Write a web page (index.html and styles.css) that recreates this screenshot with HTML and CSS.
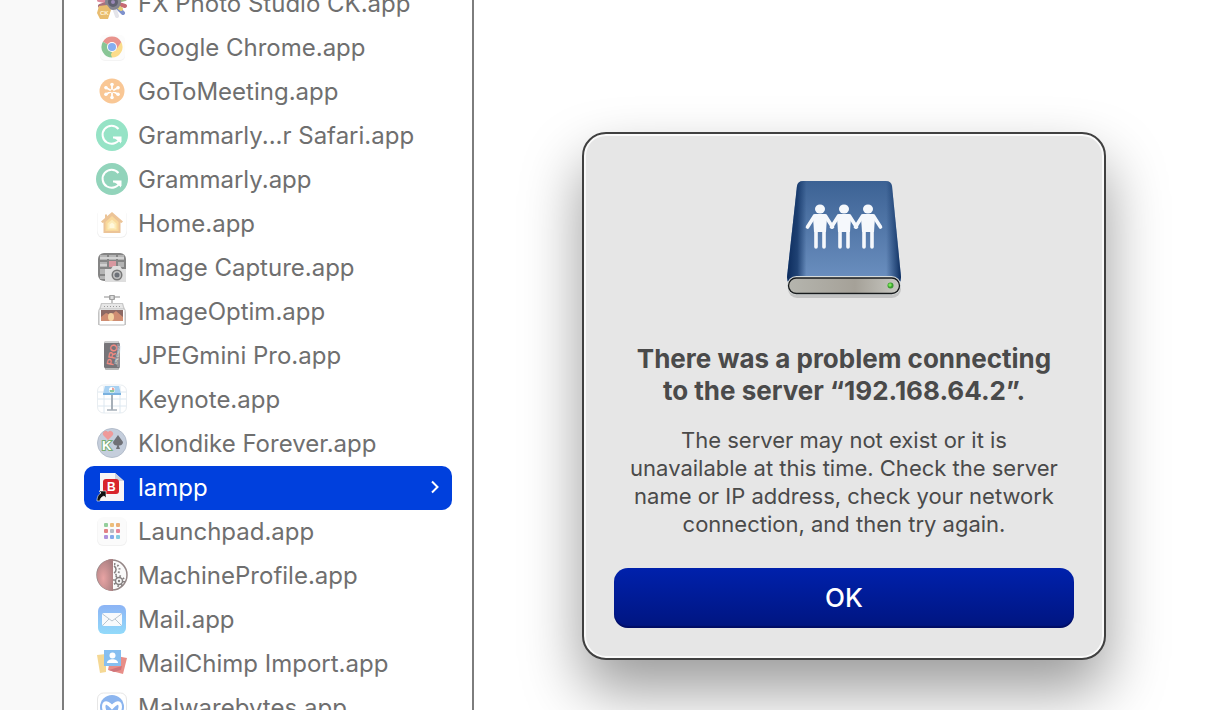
FILE: index.html
```html
<!DOCTYPE html>
<html lang="en">
<head>
  <meta charset="UTF-8" />
  <meta name="viewport" content="width=device-width, initial-scale=1.0"/>
  <title>Applications</title>
  <link rel="stylesheet" href="styles.css">
</head>
<body>
  <aside class="sidebar"></aside>

  <nav class="column" aria-label="Applications">
    <ul class="files">
      <li><a class="file" href="#">
        <svg class="icon" viewBox="0 -1 32 32">
          <g stroke-width="4" stroke-linecap="round">
            <path d="M16 14L3 12" stroke="#dc8a9c"/>
            <path d="M16 14L6 4" stroke="#8fc0d8"/>
            <path d="M16 14L26 4" stroke="#efb890"/>
            <path d="M16 14L29 11" stroke="#96b884"/>
            <path d="M16 14L29 18" stroke="#c66a72"/>
            <path d="M16 14L27 25" stroke="#7f92cc"/>
            <path d="M16 14L21 28" stroke="#e4e4ea"/>
            <path d="M16 14L4 18" stroke="#a8707c"/>
            <path d="M16 14L25 21" stroke="#e2cc78"/>
          </g>
          <circle cx="17" cy="14" r="8" fill="#85858f"/>
          <circle cx="17" cy="14" r="5" fill="#5f6070"/>
          <circle cx="17" cy="14" r="2" fill="#9a88b8"/>
          <path d="M3 18L11 17L15 22L12 31L4 31L1 25Z" fill="#e8bc6e"/>
          <text class="tiny" x="4" y="27" font-size="6" fill="#fff4d8">CK</text>
        </svg>
        <span>FX Photo Studio CK.app</span></a></li>
      <li><a class="file" href="#">
        <svg class="icon" viewBox="0 -1 32 32">
          <rect x="4" y="4" width="25" height="25" rx="5" fill="#f4f4f4"/>
          <rect x="4" y="3" width="25" height="25" rx="5" fill="#fcfcfc"/>
          <path d="M16 15L6.900 9.750A10.500 10.500 0 0 1 25.100 9.750Z" fill="#e8938d"/>
          <path d="M16 15L25.100 9.750A10.500 10.500 0 0 1 16 25.500Z" fill="#fbdc8b"/>
          <path d="M16 15L16 25.500A10.500 10.500 0 0 1 6.900 9.750Z" fill="#88c595"/>
          <path d="M16 10H25.200L20.300 17.500Z" fill="#e8938d"/>
          <path d="M20.300 17.500L16 25.500L14 20Z" fill="#fbdc8b"/>
          <path d="M6.900 9.750L11.700 17.500L16 20L14 25Z" fill="#88c595"/>
          <circle cx="16" cy="15" r="5" fill="#fff"/>
          <circle cx="16" cy="15" r="4" fill="#85aef0"/>
        </svg>
        <span>Google Chrome.app</span></a></li>
      <li><a class="file" href="#">
        <svg class="icon" viewBox="0 -1 32 32">
          <circle cx="16" cy="15" r="12.500" fill="#f9c795"/>
          <g stroke="#fff" stroke-width="1.800" stroke-linecap="round">
            <path d="M16 8V22M9.500 11.500L22.500 18.500M22.500 11.500L9.500 18.500"/>
          </g>
          <g fill="#fff">
            <circle cx="16" cy="8.500" r="1.800"/><circle cx="16" cy="21.500" r="1.800"/>
            <circle cx="10" cy="11.800" r="1.800"/><circle cx="22" cy="18.200" r="1.800"/>
            <circle cx="22" cy="11.800" r="1.800"/><circle cx="10" cy="18.200" r="1.800"/>
          </g>
          <circle cx="16" cy="15" r="1.500" fill="#f9c795"/>
        </svg>
        <span>GoToMeeting.app</span></a></li>
      <li><a class="file" href="#">
        <svg class="icon" viewBox="0 -1 32 32">
          <circle cx="16" cy="15" r="16" fill="#96e3c6"/>
          <path d="M22.500 9A9 9 0 1 0 24 18" fill="none" stroke="#fff" stroke-width="2"/>
          <path d="M17 17.500H24.500V22" fill="none" stroke="#fff" stroke-width="2"/>
          <path d="M18 18H25V23.500L22.500 21Z" fill="#fff"/>
        </svg>
        <span>Grammarly...r Safari.app</span></a></li>
      <li><a class="file" href="#">
        <svg class="icon" viewBox="0 -1 32 32">
          <circle cx="16" cy="15" r="16" fill="#92d4bb"/>
          <path d="M22.500 9A9 9 0 1 0 24 18" fill="none" stroke="#fff" stroke-width="2"/>
          <path d="M17 17.500H24.500V22" fill="none" stroke="#fff" stroke-width="2"/>
          <path d="M18 18H25V23.500L22.500 21Z" fill="#fff"/>
        </svg>
        <span>Grammarly.app</span></a></li>
      <li><a class="file" href="#">
        <svg class="icon" viewBox="0 -1 32 32">
          <rect x="1" y="2" width="30" height="28" rx="6" fill="#f0f0f0"/>
          <rect x="1.500" y="1" width="29" height="28" rx="6" fill="#fff"/>
          <path d="M16 4L27 13.500L25.500 15L24.500 14.500V25H7.500V14.500L6.500 15L5 13.500L9 10V6.500H11V8.300Z" fill="#ecc497"/>
          <path d="M16 8L22.500 14V23H9.500V14Z" fill="#f9d99c"/>
          <path d="M16 11.500L20.500 15.500V21.500H11.500V15.500Z" fill="#fcebb8"/>
          <path d="M16 14.500L18.500 16.500V20H13.500V16.500Z" fill="#fff8dc"/>
        </svg>
        <span>Home.app</span></a></li>
      <li><a class="file" href="#">
        <svg class="icon" viewBox="0 -1 32 32">
          <rect x="2" y="1" width="28" height="28" rx="6" fill="#858585"/>
          <g fill="#b4b4b4">
            <rect x="4" y="3" width="7" height="5"/><rect x="13" y="3" width="7" height="5"/><rect x="22" y="3" width="6" height="5"/>
            <rect x="4" y="10" width="7" height="5"/><rect x="22" y="10" width="6" height="5"/>
            <rect x="4" y="17" width="6" height="5"/><rect x="4" y="24" width="5" height="3"/>
          </g>
          <path d="M4 6H28M4 13H11" stroke="#d2d2d2" stroke-width="2"/>
          <rect x="13" y="9" width="7" height="6" fill="#d898a0"/>
          <path d="M9 17H15L17 14H24L26 17H30V30H9Z" fill="#dedede"/>
          <circle cx="21" cy="23" r="5.500" fill="#777"/>
          <circle cx="21" cy="23" r="4" fill="#c0c0c0"/>
          <circle cx="21" cy="23" r="2.500" fill="#6c7077"/>
        </svg>
        <span>Image Capture.app</span></a></li>
      <li><a class="file" href="#">
        <svg class="icon" viewBox="0 -1 32 32">
          <path d="M8 1H24M16 1V8" stroke="#b4b4b4" stroke-width="1.500"/>
          <rect x="13" y="-1" width="6" height="5" rx="1" fill="#a0a0a0"/>
          <rect x="14.500" y="0" width="3" height="3" fill="#ddd"/>
          <path d="M5 7H27L30 17V29H2V17Z" fill="#c9c9c9"/>
          <path d="M6 8H26L28 15H4Z" fill="#e7e7e7"/>
          <path d="M8 10.500H25" stroke="#9a9a9a" stroke-width="1" stroke-dasharray="1 2"/>
          <rect x="3" y="13" width="26" height="16" rx="1" fill="#fff" stroke="#bcbcbc"/>
          <rect x="5" y="14" width="22" height="11" fill="#8c6964"/>
          <path d="M5 25V21L10 17L15 19L20 15L27 21V25Z" fill="#cf8d72"/>
          <ellipse cx="15" cy="21" rx="3" ry="4" fill="#f4d3a2"/>
        </svg>
        <span>ImageOptim.app</span></a></li>
      <li><a class="file" href="#">
        <svg class="icon" viewBox="0 -1 32 32">
          <path d="M9 1H22L24 4V27L22 30H10L8 27V4Z" fill="#777579"/>
          <path d="M9 1H22L23 3H8.500Z" fill="#cfcfcf"/>
          <path d="M9 28H23L22 30H10Z" fill="#b8b8b8"/>
          <path d="M21 4H24V27H21Z" fill="#919096"/>
          <text class="tiny" transform="translate(17 26) rotate(-78)" font-size="10" fill="#f08a82">PRO</text>
          <text class="tiny" transform="translate(21 25) rotate(-78)" font-size="4" fill="#ddd">JPEGmini</text>
        </svg>
        <span>JPEGmini Pro.app</span></a></li>
      <li><a class="file" href="#">
        <svg class="icon" viewBox="0 -1 32 32">
          <rect x="1.500" y="1" width="29" height="28" rx="6" fill="#fff" stroke="#e8edf1"/>
          <path d="M2 8H30M2 15H30M2 22H30M8 2V29M24 2V29" stroke="#dce7f0"/>
          <path d="M15 10H17V26H15Z" fill="#a6afb8"/>
          <path d="M11 26H21" stroke="#a6afb8" stroke-width="1.500"/>
          <path d="M9 2H23L25 10H7Z" fill="#a8d1f2"/>
          <path d="M7 9H25V11H7Z" fill="#79b1df"/>
          <circle cx="16" cy="6" r="3" fill="#fff"/>
          <path d="M16 6V3.500A2.500 2.500 0 0 1 18.500 6Z" fill="#e6a198"/>
          <path d="M16 6H18.500A2.500 2.500 0 0 1 13.500 6Z" fill="#88c7a0"/>
        </svg>
        <span>Keynote.app</span></a></li>
      <li><a class="file" href="#">
        <svg class="icon" viewBox="0 -1 32 32">
          <circle cx="16" cy="15" r="14.500" fill="#c5cedc" stroke="#b4bdcb"/>
          <path d="M12 12L7.500 7.500A2.800 2.800 0 0 1 12 4A2.800 2.800 0 0 1 16.500 7.500Z" fill="#ef9a9a"/>
          <path d="M22 7L27 14A3.500 3.500 0 0 1 22.700 17.500L24 21H20L21.300 17.500A3.500 3.500 0 0 1 17 14Z" fill="#6f7076"/>
          <text class="tiny" x="6" y="22" font-size="13" fill="#fff" stroke="#76ad72" stroke-width="2" paint-order="stroke">K</text>
        </svg>
        <span>Klondike Forever.app</span></a></li>
      <li><a class="file selected" href="#" aria-current="true">
        <svg class="icon" viewBox="0 -1 32 32">
          <path d="M4 1H19L28 9V29H4Z" fill="#f7f5f5"/>
          <path d="M19 1V9H28Z" fill="#cfd1dc"/>
          <rect x="7" y="7" width="16" height="15" rx="3" fill="#d8232a"/>
          <text class="tiny" x="11" y="19" font-size="12" fill="#fff">B</text>
          <path d="M1 29C1 24 3 22 5 21L3 19H10V26L8 24C5 25 4 27 4 29Z" fill="#111" stroke="#fff" stroke-width=".6"/>
        </svg>
        <span>lampp</span>
        <svg class="chevron" viewBox="0 0 10 14"><path d="M2 1.500L7.500 7L2 12.500"/></svg></a></li>
      <li><a class="file" href="#">
        <svg class="icon" viewBox="0 -1 32 32">
          <rect x="1" y="2" width="30" height="28" rx="6" fill="#f1f1f1"/>
          <rect x="1.500" y="1" width="29" height="28" rx="6" fill="#fbfbfb"/>
          <rect x="8" y="7" width="4" height="4" rx="1" fill="#94cf9c"/>
          <rect x="14" y="7" width="4" height="4" rx="1" fill="#edbd79"/>
          <rect x="20" y="7" width="4" height="4" rx="1" fill="#eab07a"/>
          <rect x="8" y="13" width="4" height="4" rx="1" fill="#e28083"/>
          <rect x="14" y="13" width="4" height="4" rx="1" fill="#b5bdc7"/>
          <rect x="20" y="13" width="4" height="4" rx="1" fill="#e5869a"/>
          <rect x="8" y="19" width="4" height="4" rx="1" fill="#ae91db"/>
          <rect x="14" y="19" width="4" height="4" rx="1" fill="#83a9ea"/>
          <rect x="20" y="19" width="4" height="4" rx="1" fill="#83ccdf"/>
        </svg>
        <span>Launchpad.app</span></a></li>
      <li><a class="file" href="#">
        <svg class="icon" viewBox="0 -1 32 32">
          <defs>
            <radialGradient id="ball" cx=".4" cy=".6" r=".7">
              <stop offset="0" stop-color="#e8a3a3"/><stop offset="1" stop-color="#a87e80"/>
            </radialGradient>
          </defs>
          <circle cx="16" cy="15" r="15" fill="#fafafa" stroke="#968888" stroke-width="1.500"/>
          <path d="M17 -1A16 16 0 1 0 17 31Z" fill="url(#ball)"/>
          <g fill="none" stroke="#858080">
            <circle cx="23" cy="21" r="3.500" stroke-width="1.500"/>
            <circle cx="23" cy="21" r="5" stroke-width="2" stroke-dasharray="1.500 2.400"/>
            <path d="M18 6A4 4 0 0 1 18 13" stroke-width="1.500"/>
            <path d="M18 4A5.500 5.500 0 0 1 18 15" stroke-width="2" stroke-dasharray="1.500 2"/>
          </g>
          <circle cx="23" cy="21" r="1.200" fill="#858080"/>
        </svg>
        <span>MachineProfile.app</span></a></li>
      <li><a class="file" href="#">
        <svg class="icon" viewBox="0 -1 32 32">
          <defs>
            <linearGradient id="mail" x2="0" y2="1">
              <stop offset="0" stop-color="#8db4f5"/><stop offset="1" stop-color="#92dafa"/>
            </linearGradient>
          </defs>
          <rect x="2" y="1" width="28" height="29" rx="6" fill="url(#mail)"/>
          <rect x="6" y="9" width="20" height="13" rx="2" fill="#f8fafc"/>
          <path d="M6.500 10L16 17L25.500 10M6.500 21.500L13 15M25.500 21.500L19 15" fill="none" stroke="#b9c5cf"/>
        </svg>
        <span>Mail.app</span></a></li>
      <li><a class="file" href="#">
        <svg class="icon" viewBox="0 -1 32 32">
          <path d="M1 7L10 6V24L4 25Z" fill="#f5d894"/>
          <path d="M15 7L31 10L27 26L12 22Z" fill="#e88e88"/>
          <path d="M13 22L26 18L25 22L18 24Z" fill="#d0747a"/>
          <rect x="8" y="2" width="17" height="16" fill="#87bff0"/>
          <circle cx="16.500" cy="7.500" r="3" fill="#fff"/>
          <path d="M11 15C11 10 22 10 22 15Z" fill="#fff"/>
        </svg>
        <span>MailChimp Import.app</span></a></li>
      <li><a class="file" href="#">
        <svg class="icon" viewBox="0 -1 32 32">
          <rect x="1.500" y="1" width="29" height="29" rx="6" fill="#fff" stroke="#e6e6e6"/>
          <circle cx="16" cy="15" r="12" fill="#8cb5ef"/>
          <path d="M9 20C6 12 9 7 16 15C23 7 26 12 23 20" fill="none" stroke="#fff" stroke-width="3.500"/>
        </svg>
        <span>Malwarebytes.app</span></a></li>
    </ul>
  </nav>

  <main class="desktop">
    <section class="alert" role="alertdialog" aria-labelledby="alertTitle" aria-describedby="alertText">
      <svg class="drive" viewBox="0 0 128 128">
        <defs>
          <linearGradient id="cover" x2="0" y2="1">
            <stop offset="0" stop-color="#3c6294"/><stop offset="1" stop-color="#6e92c2"/>
          </linearGradient>
          <linearGradient id="edges">
            <stop offset="0" stop-color="#0c2b5c"/>
            <stop offset=".09" stop-color="#0f3163" stop-opacity=".8"/>
            <stop offset=".17" stop-color="#0f3163" stop-opacity="0"/>
            <stop offset=".87" stop-color="#0f3163" stop-opacity="0"/>
            <stop offset=".96" stop-color="#0f3163" stop-opacity=".7"/>
            <stop offset="1" stop-color="#0c2b5c"/>
          </linearGradient>
          <linearGradient id="rim">
            <stop offset="0" stop-color="#b5b5ae"/><stop offset=".6" stop-color="#a5a198"/><stop offset="1" stop-color="#c8c8c2"/>
          </linearGradient>
          <g id="person">
            <ellipse cx="0" cy="35" rx="5" ry="4.500"/>
            <path d="M-5 40H5L7 43L6 58H-6L-7 43Z"/>
            <path d="M-5.500 42L-12.500 53M5.500 42L12.500 53M-4 56V73M4 56V73" stroke="#f5f8fc" stroke-width="3.600" stroke-linecap="round"/>
          </g>
        </defs>
        <rect x="8" y="106" width="113" height="18" rx="9" fill="#000" opacity=".15"/>
        <path d="M23 7H106Q111 7 112 12L121 103Q121 112 112 112H16Q7 112 7 103L17 12Q18 7 23 7Z" fill="url(#cover)"/>
        <path d="M23 7H106Q111 7 112 12L121 103Q121 112 112 112H16Q7 112 7 103L17 12Q18 7 23 7Z" fill="url(#edges)"/>
        <rect x="7" y="102" width="114" height="19" rx="9.500" fill="#d8dcdc"/>
        <rect x="8.500" y="104" width="111" height="15.500" rx="7.700" fill="url(#rim)" stroke="#171a1c" stroke-width="1.300"/>
        <circle cx="110.500" cy="111.500" r="3" fill="#3c9b30"/>
        <circle cx="110" cy="111" r="1.700" fill="#78e956"/>
        <g fill="#f5f8fc">
          <use href="#person" x="40"/>
          <use href="#person" x="64"/>
          <use href="#person" x="88"/>
        </g>
      </svg>
      <h1 id="alertTitle">There was a problem connecting to the server “192.168.64.2”.</h1>
      <p id="alertText">The server may not exist or it is unavailable at this time. Check the server name or IP address, check your network connection, and then try again.</p>
      <button class="btn" type="button">OK</button>
    </section>
  </main>
</body>
</html>
```
FILE: styles.css
```css
body {
  margin: 0;
  height: 100vh;
  display: flex;
  overflow: hidden;
  background-color: #ffffff;
  font-family: Inter, "Liberation Sans", sans-serif;
}

.sidebar {
  flex: 0 0 62px;
  background-color: #f9f9f9;
}

.column {
  flex: 0 0 368px;
  padding: 0 20px;
  border-left: 2px solid #7d7d7d;
  border-right: 2px solid #7d7d7d;
  overflow: hidden;
}

/* scrolled part of a row down */
.files {
  list-style: none;
  margin: -18px 0 0;
  padding: 0;
}

.file {
  box-sizing: border-box;
  display: flex;
  align-items: center;
  gap: 10px;
  height: 44px;
  padding: 0 12px 2px;
  border-radius: 10px;
  color: #6f6f6f;
  font-size: 24px;
  text-decoration: none;
  white-space: nowrap;
}

.file.selected {
  background-color: #0040dd;
  color: #ffffff;
}

.icon {
  flex: none;
  width: 32px;
  height: 32px;
  overflow: visible;
}

.tiny {
  font-family: "Liberation Sans", sans-serif;
  font-weight: bold;
}

.chevron {
  width: 10px;
  height: 14px;
  margin-left: auto;
  fill: none;
  stroke: #ffffff;
  stroke-width: 2;
}

.desktop {
  flex: 1;
  display: flex;
  justify-content: center;
  align-items: flex-start;
  padding: 132px 0 0 2px;
}

.alert {
  box-sizing: border-box;
  width: 100%;
  max-width: 524px;
  display: flex;
  flex-direction: column;
  align-items: center;
  padding: 40px 30px 30px;
  border: 2px solid #404040;
  border-radius: 24px;
  background-color: #e6e6e6;
  box-shadow: inset 0 0 0 2px #fafafa, 0 30px 60px rgba(0, 0, 0, 0.4);
  color: #4a4a4a;
  text-align: center;
}

.drive {
  width: 128px;
  height: 128px;
}

.alert h1 {
  margin: 41px 0 19px;
  padding: 0 10px;
  font-size: 26px;
  line-height: 32px;
}

.alert p {
  margin: 0 0 30px;
  padding: 0 10px;
  font-size: 22px;
  line-height: 28px;
}

.btn {
  width: 100%;
  height: 60px;
  border: none;
  border-radius: 14px;
  background: linear-gradient(#0021ac, #001580);
  box-shadow: inset 0 -2px 1px rgba(0, 0, 60, 0.4);
  color: #ffffff;
  font-family: inherit;
  font-size: 26px;
  font-weight: 500;
  padding: 0 0 2px;
}
```
